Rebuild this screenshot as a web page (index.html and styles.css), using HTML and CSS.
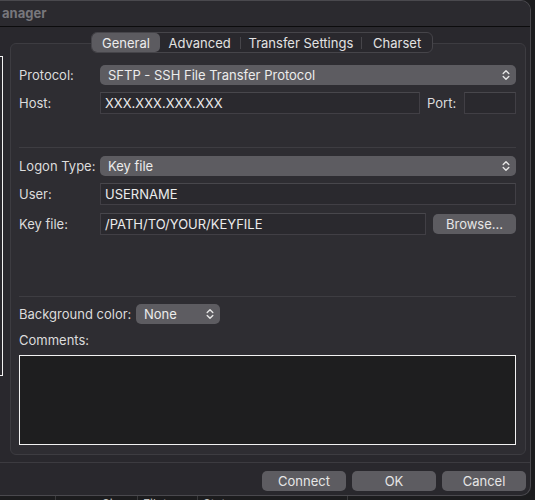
FILE: index.html
```html
<!DOCTYPE html>
<html>
<head>
<meta charset="utf-8">
<link rel="stylesheet" href="styles.css">
</head>
<body>
<div class="screen">
  <div class="top">
    <div class="window">
      <div class="titlebar"><span class="title">anager</span></div>
      <div class="content">
        <div class="left-pane"></div>
        <div class="settings">
          <div class="tabs">
            <span class="tab tab-general active">General</span>
            <span class="tab tab-advanced">Advanced</span>
            <span class="tab-sep"></span>
            <span class="tab tab-transfer">Transfer Settings</span>
            <span class="tab-sep"></span>
            <span class="tab tab-charset">Charset</span>
          </div>
          <div class="group">
            <div class="row row-protocol">
              <span class="label">Protocol:</span>
              <div class="popup popup-wide"><span>SFTP - SSH File Transfer Protocol</span>
                <svg class="chev" width="8" height="12" viewBox="0 0 8 12"><path d="M1.2 4.5 L4 1.7 L6.8 4.5 M1.2 7.5 L4 10.3 L6.8 7.5" fill="none" stroke="#e6e6e6" stroke-width="1.4" stroke-linecap="round" stroke-linejoin="round"/></svg>
              </div>
            </div>
            <div class="row row-host">
              <span class="label">Host:</span>
              <div class="field field-host">XXX.XXX.XXX.XXX</div>
              <span class="label-port">Port:</span>
              <div class="field field-port"></div>
            </div>
            <div class="hr hr-1"></div>
            <div class="row row-logon">
              <span class="label">Logon Type:</span>
              <div class="popup popup-wide"><span>Key file</span>
                <svg class="chev" width="8" height="12" viewBox="0 0 8 12"><path d="M1.2 4.5 L4 1.7 L6.8 4.5 M1.2 7.5 L4 10.3 L6.8 7.5" fill="none" stroke="#e6e6e6" stroke-width="1.4" stroke-linecap="round" stroke-linejoin="round"/></svg>
              </div>
            </div>
            <div class="row row-user">
              <span class="label">User:</span>
              <div class="field field-user">USERNAME</div>
            </div>
            <div class="row row-key">
              <span class="label">Key file:</span>
              <div class="field field-key">/PATH/TO/YOUR/KEYFILE</div>
              <div class="button button-browse">Browse...</div>
            </div>
            <div class="hr hr-2"></div>
            <div class="row row-bg">
              <span class="label-bg">Background color:</span>
              <div class="popup popup-small"><span>None</span>
                <svg class="chev" width="8" height="12" viewBox="0 0 8 12"><path d="M1.2 4.5 L4 1.7 L6.8 4.5 M1.2 7.5 L4 10.3 L6.8 7.5" fill="none" stroke="#e6e6e6" stroke-width="1.4" stroke-linecap="round" stroke-linejoin="round"/></svg>
              </div>
            </div>
            <div class="comments-label">Comments:</div>
            <div class="comments"></div>
          </div>
        </div>
      </div>
      <div class="footer">
        <div class="button">Connect</div>
        <div class="button">OK</div>
        <div class="button">Cancel</div>
      </div>
    </div>
    <div class="edge"></div>
  </div>
  <div class="below">
    <div class="col col-a"></div>
    <div class="col col-size">Size</div>
    <div class="col col-type">Filetype</div>
    <div class="col col-status">Status</div>
    <div class="col col-rest"></div>
  </div>
</div>
</body>
</html>
```

FILE: styles.css
```css
* { box-sizing: border-box; }
html, body { margin: 0; padding: 0; background: #1c1c1e; }
body {
  font-family: "Inter", "Liberation Sans", sans-serif;
  font-size: 13px;
  color: #dedede;
}
.screen {
  width: 535px;
  height: 500px;
  overflow: hidden;
  display: flex;
  flex-direction: column;
}
.top {
  display: flex;
  height: 496px;
}
.window {
  width: 531px;
  height: 496px;
  background: #29282d;
  border-radius: 0 10px 10px 0;
  border: 1px solid #4a494e;
  border-left: none;
  display: flex;
  flex-direction: column;
  overflow: hidden;
}
.edge {
  flex: 1;
  background: #1b1b1d;
}
.titlebar {
  height: 26px;
  background: #2b2a2f;
  border-bottom: 1px solid #0c0c0d;
  display: flex;
  align-items: center;
  padding-left: 2px;
  flex-shrink: 0;
}
.title {
  font-weight: 700;
  color: #78777c;
  font-size: 13px;
  margin-top: -1px;
}
.content {
  display: flex;
  height: 435px;
  padding-top: 5px;
  flex-shrink: 0;
}
.left-pane {
  width: 3px;
  height: 320px;
  margin-top: 24px;
  border: 1px solid #f2f2f2;
  border-left: none;
  flex-shrink: 0;
}
.settings {
  margin-left: 7px;
  width: 516px;
  display: flex;
  flex-direction: column;
}
.tabs {
  position: relative;
  z-index: 2;
  margin-left: 81px;
  width: 342px;
  height: 21px;
  display: flex;
  align-items: center;
  background: #29282d;
  border: 1px solid #46454a;
  border-radius: 6px;
  padding: 0;
}
.tab {
  height: 19px;
  display: flex;
  align-items: center;
  justify-content: center;
  color: #e2e2e2;
}
.tab.active {
  background: #5c5b60;
  border-radius: 5px;
  color: #ececec;
}
.tab-general { width: 68px; }
.tab-advanced { width: 80px; }
.tab-transfer { width: 121px; }
.tab-charset { width: 70px; }
.tab-sep {
  width: 1px;
  height: 12px;
  background: #46454a;
}
.group {
  margin-top: -10px;
  height: 412px;
  background: #2e2d32;
  border: 1px solid #3d3c41;
  border-radius: 6px;
  padding: 21px 9px 8px 8px;
  display: flex;
  flex-direction: column;
}
.row {
  display: flex;
  align-items: center;
}
.label {
  width: 81px;
  flex-shrink: 0;
  color: #dcdcdc;
}
.popup {
  height: 20px;
  background: #5d5c61;
  border-radius: 5px;
  display: flex;
  align-items: center;
  justify-content: space-between;
  padding: 0 6px 0 8px;
  color: #ececec;
}
.popup-wide { flex: 1; }
.chev { flex-shrink: 0; }
.row-protocol { height: 20px; }
.row-host { height: 22px; margin-top: 7px; }
.field {
  height: 22px;
  background: #2a292e;
  border: 1px solid #413f45;
  border-top-color: #48474c;
  display: flex;
  align-items: center;
  padding-left: 4px;
  color: #ececec;
}
.field-host { width: 320px; }
.label-port {
  width: 37px;
  margin-left: 7px;
  color: #dcdcdc;
}
.field-port { width: 52px; }
.hr {
  height: 1px;
  background: #3e3d42;
  flex-shrink: 0;
}
.hr-1 { margin-top: 33px; }
.row-logon { height: 20px; margin-top: 8px; }
.row-user { height: 22px; margin-top: 7px; }
.field-user { flex: 1; }
.row-key { height: 22px; margin-top: 8px; }
.field-key { width: 326px; }
.button {
  height: 20px;
  width: 84px;
  background: #5d5c61;
  border-radius: 5px;
  display: flex;
  align-items: center;
  justify-content: center;
  color: #e6e6e6;
}
.button-browse { margin-left: 7px; width: 83px; }
.hr-2 { margin-top: 61px; }
.row-bg { height: 20px; margin-top: 7px; }
.label-bg { width: 117px; color: #dcdcdc; }
.popup-small { width: 84px; }
.comments-label {
  margin-top: 8px;
  line-height: 16px;
  color: #dcdcdc;
}
.comments {
  margin-top: 7px;
  height: 90px;
  background: #1e1e1f;
  border: 1px solid #f2f2f2;
}
.footer {
  flex: 1;
  border-top: 1px solid #3c3b40;
  display: flex;
  justify-content: flex-end;
  gap: 6px;
  padding: 8px 4px 0 0;
}
.below {
  height: 4px;
  background: #1c1c1e;
  display: flex;
  overflow: hidden;
}
.col {
  height: 4px;
  border-right: 1px solid #3a3a3c;
  color: #bdbdbd;
  font-size: 12px;
  line-height: 12px;
  padding-top: 2px;
  overflow: hidden;
  white-space: nowrap;
}
.col-a { width: 56px; }
.col-size { width: 82px; text-align: right; padding-right: 11px; }
.col-type { width: 60px; padding-left: 5px; }
.col-status { width: 150px; padding-left: 5px; }
.col-rest { flex: 1; border-right: none; }
```
